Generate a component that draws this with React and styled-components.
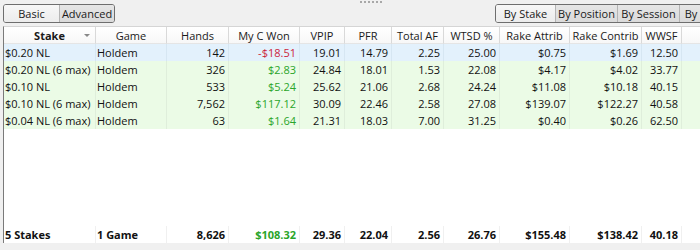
import React from "react";
import styled, { createGlobalStyle } from "styled-components";

const Global = createGlobalStyle`
  html, body { margin: 0; padding: 0; background: #f0f0f0; }
  body { font-family: "Open Sans", "Noto Sans", "DejaVu Sans", sans-serif; font-size: 11px; color: #000; }
`;

const COLS = "92px 71px 62px 71px 45px 47px 52px 56px 70px 72px 40px 1fr";

const Page = styled.div`
  width: 700px;
  height: 250px;
  display: flex;
  flex-direction: column;
  overflow: hidden;
  position: relative;
`;

const Toolbar = styled.div`
  height: 26px;
  display: flex;
  align-items: flex-start;
  justify-content: space-between;
  padding: 4px 0 0 3px;
  box-sizing: border-box;
`;

const Group = styled.div`
  display: flex;
  height: 19px;
  border: 1px solid #6e6e6e;
  border-radius: 3px;
  box-sizing: border-box;
  overflow: hidden;
  margin-right: ${p => (p.$cut ? "-30px" : "0")};
`;

const Seg = styled.div`
  width: ${p => p.$w}px;
  display: flex;
  align-items: center;
  justify-content: center;
  font-size: 11px;
  color: #1a1a1a;
  background: ${p => (p.$light ? "linear-gradient(#f7f7f7, #ececec)" : "linear-gradient(#e6e6e6, #dadada)")};
  border-left: ${p => (p.$first ? "none" : "1px solid #b4b4b4")};
  box-sizing: border-box;
  white-space: nowrap;
`;

const Grip = styled.div`
  position: absolute;
  top: 1px;
  left: 360px;
  display: flex;
  gap: 2px;
`;

const Dot = styled.span`
  width: 2px;
  height: 2px;
  background: #a8a8a8;
`;

const Grid = styled.div`
  flex: 1;
  display: flex;
  flex-direction: column;
  margin-left: 3px;
  border-left: 1px solid #7a7a7a;
  border-top: 1px solid #d5d5d5;
  background: #fff;
`;

const Row = styled.div`
  display: grid;
  grid-template-columns: ${COLS};
  height: ${p => (p.$header ? 17 : 17)}px;
  background: ${p => p.$bg || "#fff"};
  font-weight: ${p => (p.$bold ? 700 : 400)};
`;

const HeadCell = styled.div`
  display: flex;
  align-items: center;
  justify-content: center;
  position: relative;
  border-right: 1px solid #d9d9d9;
  border-bottom: 1px solid #e5e5e5;
  background: linear-gradient(#ffffff, #f7f7f7);
  color: #1a1a1a;
  font-weight: ${p => (p.$strong ? 700 : 400)};
  white-space: nowrap;
  &:last-child { border-right: none; }
`;

const SortArrow = styled.span`
  position: absolute;
  right: 5px;
  top: 7px;
  width: 0;
  height: 0;
  border-left: 3px solid transparent;
  border-right: 3px solid transparent;
  border-top: 3px solid #888;
`;

const Cell = styled.div`
  display: flex;
  align-items: center;
  justify-content: ${p => (p.$left ? "flex-start" : "flex-end")};
  padding: ${p => (p.$left ? "0 0 0 1px" : "0 3px 0 0")};
  border-right: 1px solid ${p => p.$line || "#e4ede2"};
  color: ${p => p.$color || "#111"};
  white-space: nowrap;
  overflow: hidden;
  &:last-child { border-right: none; }
`;

const Body = styled.div`
  flex: 1;
  display: flex;
  flex-direction: column;
`;

const Filler = styled.div`
  flex: 1;
  background: #fff;
`;

const Bottom = styled.div`
  height: 7px;
  background: #f0f0f0;
  margin-left: -4px;
`;

const RED = "#cc1f3c";
const GREEN = "#2aa52a";

const headers = ["Stake", "Game", "Hands", "My C Won", "VPIP", "PFR", "Total AF", "WTSD %", "Rake Attrib", "Rake Contrib", "WWSF", ""];

const rows = [
  ["$0.20 NL", "Holdem", "142", "-$18.51", "19.01", "14.79", "2.25", "25.00", "$0.75", "$1.69", "12.50"],
  ["$0.20 NL (6 max)", "Holdem", "326", "$2.83", "24.84", "18.01", "1.53", "22.08", "$4.17", "$4.02", "33.77"],
  ["$0.10 NL", "Holdem", "533", "$5.24", "25.62", "21.06", "2.68", "24.24", "$11.08", "$10.18", "40.15"],
  ["$0.10 NL (6 max)", "Holdem", "7,562", "$117.12", "30.09", "22.46", "2.58", "27.08", "$139.07", "$122.27", "40.58"],
  ["$0.04 NL (6 max)", "Holdem", "63", "$1.64", "21.31", "18.03", "7.00", "31.25", "$0.40", "$0.26", "62.50"],
];

const total = ["5 Stakes", "1 Game", "8,626", "$108.32", "29.36", "22.04", "2.56", "26.76", "$155.48", "$138.42", "40.18"];

function DataRow({ data, bg, line, bold }) {
  return (
    <Row $bg={bg} $bold={bold}>
      {data.map((v, i) => (
        <Cell
          key={i}
          $left={i < 2}
          $line={line}
          $color={i === 3 ? (v.startsWith("-") ? RED : GREEN) : undefined}
        >
          {v}
        </Cell>
      ))}
      <Cell $line={line} />
    </Row>
  );
}

export default function App() {
  return (
    <Page>
      <Global />
      <Grip>
        {Array.from({ length: 6 }).map((_, i) => <Dot key={i} />)}
      </Grip>
      <Toolbar>
        <Group>
          <Seg $w={55} $light $first>Basic</Seg>
          <Seg $w={55}>Advanced</Seg>
        </Group>
        <Group $cut>
          <Seg $w={59} $light $first>By Stake</Seg>
          <Seg $w={62}>By Position</Seg>
          <Seg $w={62}>By Session</Seg>
          <Seg $w={50}>By Date</Seg>
        </Group>
      </Toolbar>
      <Grid>
        <Row $header>
          {headers.map((h, i) => (
            <HeadCell key={i} $strong={i === 0}>
              {h}
              {i === 0 && <SortArrow />}
            </HeadCell>
          ))}
        </Row>
        <Body>
          {rows.map((r, i) => (
            <DataRow key={i} data={r} bg={i === 0 ? "#e3f1fc" : "#ebfbe6"} line={i === 0 ? "#d6e6f2" : "#dfeedb"} />
          ))}
          <Filler />
        </Body>
        <DataRow data={total} bg="#fff" line="#f0f0f0" bold />
        <Bottom />
      </Grid>
    </Page>
  );
}
